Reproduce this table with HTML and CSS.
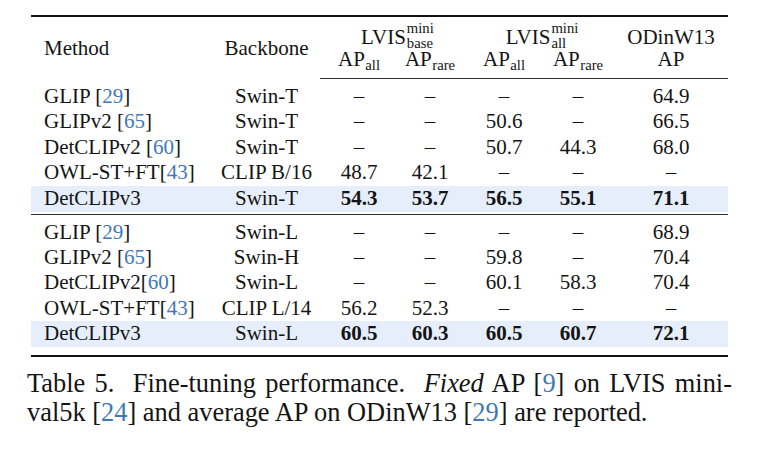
FILE: index.html
```html
<!DOCTYPE html>
<html lang="en">
<head>
<meta charset="utf-8">
<title>Table 5</title>
<link rel="stylesheet" href="styles.css">
</head>
<body>
<div class="page">
  <table class="results">
    <colgroup>
      <col class="c-method"><col class="c-backbone"><col class="c-ap1"><col class="c-ap2"><col class="c-ap3"><col class="c-ap4"><col class="c-odinw">
    </colgroup>
    <thead>
      <tr class="h1">
        <th rowspan="2" class="method">Method</th>
        <th rowspan="2" class="mid">Backbone</th>
        <th colspan="2" class="grp">LVIS<span class="sup z">mini</span><span class="sub">base</span></th>
        <th colspan="2" class="grp">LVIS<span class="sub z">all</span><span class="sup">mini</span></th>
        <th class="od">ODinW13</th>
      </tr>
      <tr class="h2">
        <th>AP<span class="sb">all</span></th>
        <th>AP<span class="sb">rare</span></th>
        <th>AP<span class="sb">all</span></th>
        <th>AP<span class="sb">rare</span></th>
        <th class="od">AP</th>
      </tr>
    </thead>
    <tbody class="g1">
      <tr class="first"><td class="method">GLIP [<span class="cite">29</span>]</td><td>Swin-T</td><td>–</td><td>–</td><td>–</td><td>–</td><td class="od">64.9</td></tr>
      <tr><td class="method">GLIPv2 [<span class="cite">65</span>]</td><td>Swin-T</td><td>–</td><td>–</td><td>50.6</td><td>–</td><td class="od">66.5</td></tr>
      <tr><td class="method">DetCLIPv2 [<span class="cite">60</span>]</td><td>Swin-T</td><td>–</td><td>–</td><td>50.7</td><td>44.3</td><td class="od">68.0</td></tr>
      <tr><td class="method">OWL-ST+FT[<span class="cite">43</span>]</td><td>CLIP B/16</td><td>48.7</td><td>42.1</td><td>–</td><td>–</td><td class="od">–</td></tr>
      <tr class="ours last"><td class="method">DetCLIPv3</td><td>Swin-T</td><td><b>54.3</b></td><td><b>53.7</b></td><td><b>56.5</b></td><td><b>55.1</b></td><td class="od"><b>71.1</b></td></tr>
    </tbody>
    <tbody class="g2">
      <tr class="first"><td class="method">GLIP [<span class="cite">29</span>]</td><td>Swin-L</td><td>–</td><td>–</td><td>–</td><td>–</td><td class="od">68.9</td></tr>
      <tr><td class="method">GLIPv2 [<span class="cite">65</span>]</td><td>Swin-H</td><td>–</td><td>–</td><td>59.8</td><td>–</td><td class="od">70.4</td></tr>
      <tr><td class="method">DetCLIPv2[<span class="cite">60</span>]</td><td>Swin-L</td><td>–</td><td>–</td><td>60.1</td><td>58.3</td><td class="od">70.4</td></tr>
      <tr><td class="method">OWL-ST+FT[<span class="cite">43</span>]</td><td>CLIP L/14</td><td>56.2</td><td>52.3</td><td>–</td><td>–</td><td class="od">–</td></tr>
      <tr class="ours last"><td class="method">DetCLIPv3</td><td>Swin-L</td><td><b>60.5</b></td><td><b>60.3</b></td><td><b>60.5</b></td><td><b>60.7</b></td><td class="od"><b>72.1</b></td></tr>
    </tbody>
  </table>
  <p class="caption">Table 5.&nbsp; Fine-tuning performance.&nbsp; <i>Fixed</i> AP [<span class="cite">9</span>] on LVIS mini-val5k [<span class="cite">24</span>] and average AP on ODinW13 [<span class="cite">29</span>] are reported.</p>
</div>
</body>
</html>
```
FILE: styles.css
```css
html, body {
  margin: 0;
  background: #ffffff;
}

body {
  color: #141414;
  font-family: "Liberation Serif", "Times New Roman", serif;
}

.page {
  padding: 15px 0 0 31px;
  width: 702px;
}

.results {
  border-collapse: collapse;
  table-layout: fixed;
  width: 697px;
  font-size: 21px;
  border-top: 2px solid #111;
  border-bottom: 2px solid #111;
}

.c-method { width: 182px; }
.c-backbone { width: 107px; }
.c-ap1 { width: 78px; }
.c-ap2 { width: 64px; }
.c-ap3 { width: 84px; }
.c-ap4 { width: 64px; }
.c-odinw { width: 118px; }

.results th,
.results td {
  padding: 0;
  text-align: center;
  font-weight: normal;
  white-space: nowrap;
}

.results .method {
  text-align: left;
  text-indent: 13px;
}

.results .od {
  text-indent: 4px;
}

/* header */
.h1 th {
  line-height: 24px;
  padding-top: 7.5px;
  vertical-align: top;
}

.h1 th.method,
.h1 th.mid {
  line-height: 22px;
  vertical-align: middle;
  padding-top: 0;
}

.h1 th.grp {
  text-indent: 12px;
}

.sup,
.sub {
  display: inline-block;
  font-size: 14.7px;
  line-height: 0;
  text-indent: 0;
}

.sup {
  vertical-align: 10.5px;
}

.sub {
  vertical-align: -4.5px;
}

.grp .sup,
.grp .sub {
  margin-left: 1px;
}

.grp .z {
  width: 0;
  margin-right: -1px;
}

.h2 th {
  line-height: 18px;
  padding-top: 1.5px;
  padding-bottom: 10px;
  border-bottom: 1px solid #333;
}

.sb {
  font-size: 14.7px;
  line-height: 0;
  vertical-align: -4px;
  margin-left: 0.5px;
}

/* body */
.results tbody td {
  line-height: 25.4px;
  background-clip: content-box;
}

.results tbody tr.first td {
  padding-top: 5px;
}

.g1 tr.last td {
  padding-bottom: 2.5px;
  border-bottom: 1px solid #333;
}

.g2 tr.first td {
  padding-top: 3px;
}

.g2 tr.last td {
  padding-bottom: 8px;
}

.ours td {
  background-color: #e5eefa;
}

.ours b {
  font-weight: bold;
}

.cite {
  color: #3f78b6;
}

/* caption */
.caption {
  margin: 12.5px 0 0 -4px;
  width: 705px;
  font-size: 26.4px;
  line-height: 29px;
  text-align: justify;
}
```
